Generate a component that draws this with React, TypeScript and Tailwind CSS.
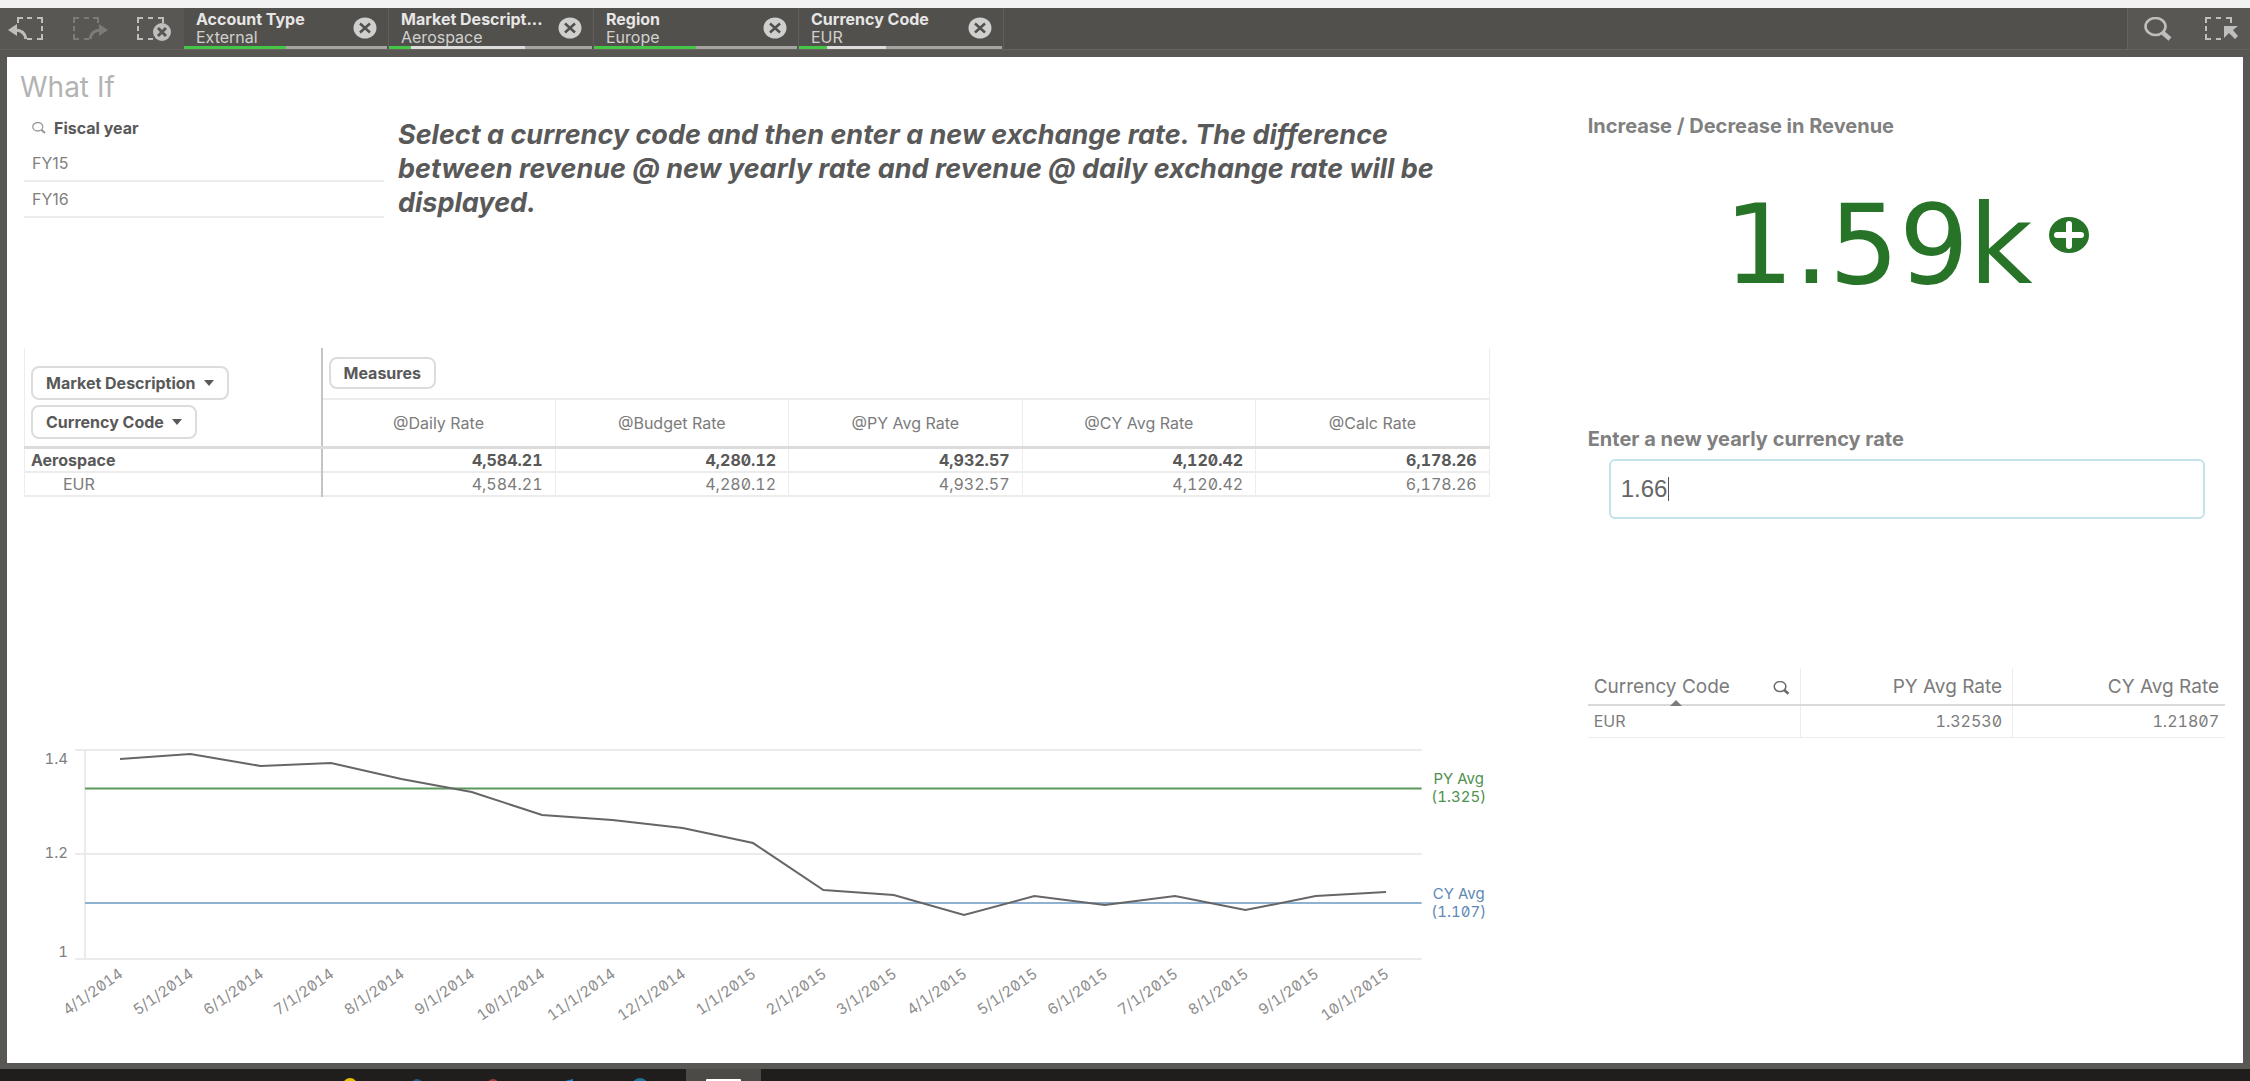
import React, { useState } from 'react';

interface Selection {
  field: string;
  value: string;
  selected: string;
  alternative: string;
}

const selections: Selection[] = [
  { field: 'Account Type', value: 'External', selected: 'w-1/2', alternative: 'w-0' },
  { field: 'Market Descript...', value: 'Aerospace', selected: 'w-[11%]', alternative: 'w-[56%]' },
  { field: 'Region', value: 'Europe', selected: 'w-1/2', alternative: 'w-0' },
  { field: 'Currency Code', value: 'EUR', selected: 'w-[14%]', alternative: 'w-[29%]' },
];

const measures = ['@Daily Rate', '@Budget Rate', '@PY Avg Rate', '@CY Avg Rate', '@Calc Rate'];
const totals = ['4,584.21', '4,280.12', '4,932.57', '4,120.42', '6,178.26'];

const rates = [
  { date: '4/1/2014', y: 760 },
  { date: '5/1/2014', y: 755 },
  { date: '6/1/2014', y: 767 },
  { date: '7/1/2014', y: 764 },
  { date: '8/1/2014', y: 780 },
  { date: '9/1/2014', y: 793 },
  { date: '10/1/2014', y: 816 },
  { date: '11/1/2014', y: 821 },
  { date: '12/1/2014', y: 829 },
  { date: '1/1/2015', y: 844 },
  { date: '2/1/2015', y: 891 },
  { date: '3/1/2015', y: 896 },
  { date: '4/1/2015', y: 916 },
  { date: '5/1/2015', y: 897 },
  { date: '6/1/2015', y: 906 },
  { date: '7/1/2015', y: 897 },
  { date: '8/1/2015', y: 911 },
  { date: '9/1/2015', y: 897 },
  { date: '10/1/2015', y: 893 },
].map((r, i) => ({ date: r.date, x: 96 + i * 70.3, y: r.y - 740 }));

const BackIcon = ({ className = '' }: { className?: string }) => (
  <svg width="36" height="26" viewBox="0 0 36 26" fill="none" stroke="currentColor" strokeWidth="2" className={className}>
    <path d="M10 7V2h5M19 2h5M29 2h5v5M34 10v5M34 18v5h-5M19 23h5" />
    <path d="M7 14c6 0 10 3 11 9" strokeWidth="3" />
    <path d="M0 14l9-6v12z" fill="currentColor" stroke="none" />
  </svg>
);

const ClearIcon = () => (
  <svg width="36" height="26" viewBox="0 0 36 26" fill="none" stroke="currentColor" strokeWidth="2">
    <path d="M2 7V2h5M12 2h5M22 2h5v5M2 10v5M2 18v5h5M12 23h5" />
    <circle cx="26" cy="16" r="9" fill="currentColor" stroke="none" />
    <path d="M22 12l8 8M30 12l-8 8" stroke="#595753" strokeWidth="3" />
  </svg>
);

const SelectIcon = () => (
  <svg width="34" height="26" viewBox="0 0 34 26" fill="none" stroke="currentColor" strokeWidth="2">
    <path d="M2 7V2h5M12 2h5M22 2h5v5M2 10v5M2 18v5h5M12 23h5" />
    <path d="M20 10h14l-5 4 5 6-3 3-6-6-5 5z" fill="currentColor" stroke="none" />
  </svg>
);

const SearchIcon = ({ className = '' }: { className?: string }) => (
  <svg viewBox="0 0 28 24" fill="none" stroke="currentColor" className={className}>
    <ellipse cx="11.500" cy="9.500" rx="10" ry="8.500" strokeWidth="2.600" />
    <path d="M18.500 15.500l7.500 6.500" strokeWidth="4.400" />
  </svg>
);

const CloseIcon = () => (
  <svg width="24" height="22" viewBox="0 0 24 22">
    <ellipse cx="12" cy="11" rx="11.500" ry="10.500" fill="#cfcfce" />
    <path d="M7 6.500l10 9M17 6.500l-10 9" stroke="#52504c" strokeWidth="2.500" />
  </svg>
);

const Caret = () => (
  <svg width="10" height="6" viewBox="0 0 10 6" fill="currentColor">
    <path d="M0 0h10L5 6z" />
  </svg>
);

const SelectionsBar = () => (
  <header className="flex h-[42px] border-b border-[#65635f] bg-[#595753] text-[#bebebd]">
    <div className="flex w-[184px] items-center gap-7 pl-2">
      <button aria-label="Step back"><BackIcon /></button>
      <button aria-label="Step forward" disabled><BackIcon className="-scale-x-100 text-[#7d7b78]" /></button>
      <button aria-label="Clear all selections"><ClearIcon /></button>
    </div>
    <div className="flex flex-1 bg-[#52504c]">
      {selections.map((s) => (
        <div key={s.field} className="flex w-[205px] flex-col border-r border-[#605e5a] pr-px">
          <div className="flex flex-1 items-center justify-between pt-[2px] pr-[10px] pl-3">
            <div className="text-base leading-[18px]">
              <div className="font-bold text-[#e6e6e6]">{s.field}</div>
              <div className="text-[#d0d0cf]">{s.value}</div>
            </div>
            <button aria-label={`Clear ${s.field}`}><CloseIcon /></button>
          </div>
          <div className="flex h-[3px] shrink-0 bg-[#a6a5a3]">
            <div className={`bg-[#46c646] ${s.selected}`} />
            <div className={`bg-[#dddddd] ${s.alternative}`} />
          </div>
        </div>
      ))}
    </div>
    <div className="flex items-center gap-8 border-l border-[#65635f] pr-3 pl-4">
      <button aria-label="Search"><SearchIcon className="h-6 w-7" /></button>
      <button aria-label="Selections tool"><SelectIcon /></button>
    </div>
  </header>
);

const FiscalYearFilter = () => (
  <div className="w-[360px] text-base text-[#7f7f7f]">
    <div className="flex h-9 items-center gap-2 pl-2">
      <SearchIcon className="h-3 w-[14px] text-[#999999]" />
      <h2 className="font-bold text-[#595959]">Fiscal year</h2>
    </div>
    <ul>
      {['FY15', 'FY16'].map((year) => (
        <li key={year} className="flex h-9 items-center border-b-2 border-[#ececec] pl-2">{year}</li>
      ))}
    </ul>
  </div>
);

const PivotTable = () => {
  const chip = 'inline-flex items-center gap-2 rounded-lg border-2 border-[#dcdcdc] px-[13px] font-bold text-[#595959]';
  return (
    <table className="w-full table-fixed border-collapse text-base text-[#7b7b7b]">
      <colgroup>
        <col className="w-[297px]" />
        {measures.map((m) => <col key={m} />)}
      </colgroup>
      <thead>
        <tr className="h-[51px]">
          <th rowSpan={2} className="border-r-2 border-b-[3px] border-l border-l-[#ececec] border-r-[#c4c4c4] border-b-[#dcdcdc] pt-3 pl-[6px]">
            <div className="flex flex-col items-start gap-[5px]">
              <button className={`${chip} h-[34px]`}>Market Description <Caret /></button>
              <button className={`${chip} h-[34px]`}>Currency Code <Caret /></button>
            </div>
          </th>
          <th colSpan={5} className="border-r border-b-2 border-[#ececec] pl-[6px] text-left">
            <button className={`${chip} h-8`}>Measures</button>
          </th>
        </tr>
        <tr className="h-12">
          {measures.map((m) => (
            <th key={m} className="border-r border-b-[3px] border-r-[#ececec] border-b-[#dcdcdc] font-normal">{m}</th>
          ))}
        </tr>
      </thead>
      <tbody className="leading-[22px]">
        <tr className="border-b-2 border-[#ececec] font-bold text-[#595959]">
          <th className="border-r-2 border-l border-l-[#ececec] border-r-[#c4c4c4] pl-[6px] text-left">Aerospace</th>
          {totals.map((t) => (
            <td key={t} className="border-r border-[#ececec] pr-3 text-right slashed-zero tabular-nums">{t}</td>
          ))}
        </tr>
        <tr className="border-b-2 border-[#ececec]">
          <th className="border-r-2 border-l border-l-[#ececec] border-r-[#c4c4c4] pl-[38px] text-left font-normal">EUR</th>
          {totals.map((t) => (
            <td key={t} className="border-r border-[#ececec] pr-3 text-right slashed-zero tabular-nums">{t}</td>
          ))}
        </tr>
      </tbody>
    </table>
  );
};

const RateChart = () => (
  <svg viewBox="0 0 1465 300" className="block w-full text-[15px] slashed-zero tabular-nums" role="img" aria-label="Exchange rate by month">
    <g stroke="#ebebeb" strokeWidth="2">
      <path d="M51 11H1397M51 115H1397M51 220H1397M61 11V220" />
    </g>
    <g fill="#7f7f7f" textAnchor="end">
      <text x="44" y="25">1.4</text>
      <text x="44" y="119">1.2</text>
      <text x="44" y="218">1</text>
    </g>
    <path d="M61 49.500H1397" stroke="#5b985b" strokeWidth="2" />
    <path d="M61 164H1397" stroke="#8fb2d3" strokeWidth="2" />
    <polyline points={rates.map((r) => `${r.x},${r.y}`).join(' ')} fill="none" stroke="#666666" strokeWidth="2" />
    <g textAnchor="middle" fill="#4f8f4f">
      <text x="1434" y="45">PY Avg</text>
      <text x="1434" y="63">(1.325)</text>
    </g>
    <g textAnchor="middle" fill="#6189b5">
      <text x="1434" y="160">CY Avg</text>
      <text x="1434" y="178">(1.107)</text>
    </g>
    <g textAnchor="end" fill="#8c8c8c">
      {rates.map((r) => (
        <text key={r.date} transform={`translate(${r.x + 4} 237) rotate(-35)`}>{r.date}</text>
      ))}
    </g>
  </svg>
);

const RateTable = () => (
  <table className="w-full table-fixed border-collapse text-[#7b7b7b]">
    <thead>
      <tr className="h-[37px] border-b-2 border-[#d9d9d9] text-[19px]">
        <th className="border-r border-r-[#ececec] px-[6px] pt-[3px] font-normal">
          <div className="relative flex items-center justify-between pr-1">
            Currency Code
            <SearchIcon className="h-[14px] w-[17px] text-[#6b6b6b]" />
            <svg width="12" height="6" viewBox="0 0 12 6" className="absolute -bottom-1 left-[76px]" fill="#7b7b7b">
              <path d="M0 6h12L6 0z" />
            </svg>
          </div>
        </th>
        <th className="border-r border-r-[#ececec] px-[10px] pt-[3px] text-right font-normal">PY Avg Rate</th>
        <th className="px-[6px] pt-[3px] text-right font-normal">CY Avg Rate</th>
      </tr>
    </thead>
    <tbody>
      <tr className="h-8 border-b border-[#ececec] text-base">
        <td className="border-r border-r-[#ececec] px-[6px]">EUR</td>
        <td className="border-r border-r-[#ececec] px-[10px] text-right slashed-zero tabular-nums">1.32530</td>
        <td className="px-[6px] text-right slashed-zero tabular-nums">1.21807</td>
      </tr>
    </tbody>
  </table>
);

const RateInput = () => {
  const [rate, setRate] = useState('1.66');

  return (
    <div className="text-xl leading-7 font-bold text-[#808080]">
      <label htmlFor="rate">Enter a new yearly currency rate</label>
      <div className="relative mt-[6px] mr-5 ml-[21px]">
        <input
          id="rate"
          value={rate}
          onChange={(e) => setRate(e.target.value)}
          className="h-[60px] w-full rounded-md border-2 border-[#c3e2ec] px-[10px] font-['Liberation_Sans',sans-serif] text-2xl font-normal text-[#666666] outline-none"
        />
        <span className="absolute top-[18px] left-[59px] h-6 w-px bg-[#555555]" />
      </div>
    </div>
  );
};

const Taskbar = () => (
  <footer className="h-3 bg-[#1f1e1c]">
    <svg width="800" height="12" viewBox="0 0 800 12" className="block">
      <rect x="686" width="75" height="12" fill="#4b4a47" />
      <rect x="706" y="10" width="35" height="4" rx="1" fill="#ffffff" />
      <circle cx="350" cy="16" r="7" fill="#e5c100" />
      <circle cx="417" cy="16" r="6" fill="#1f5a86" />
      <circle cx="493" cy="16" r="6" fill="#a03c3c" />
      <path d="M565 12l8-2v2z" fill="#1f7fd0" />
      <circle cx="640" cy="17" r="8" fill="#1f6f9a" />
    </svg>
  </footer>
);

const App: React.FC = () => {
  return (
    <div className="flex min-h-screen flex-col bg-[#595753] font-['Inter',sans-serif]">
      <div className="h-2 bg-[#f2f2f2]" />
      <SelectionsBar />
      <main className="mx-[7px] mt-[7px] mb-[6px] grid flex-1 grid-cols-[1465fr_637fr] content-start gap-x-[98px] bg-white pr-[18px] pl-[17px]">
        <section>
          <h1 className="-ml-1 pt-3 text-[28px] leading-9 text-[#b3b3b3]">What If</h1>
          <div className="mt-[5px] flex items-start gap-[14px]">
            <FiscalYearFilter />
            <p className="mt-2 flex-1 text-[27px] leading-[34px] font-bold text-[#595959] italic">
              Select a currency code and then enter a new exchange rate. The difference between revenue @ new yearly
              rate and revenue @ daily exchange rate will be displayed.
            </p>
          </div>
          <div className="mt-[128px]">
            <PivotTable />
          </div>
          <div className="mt-[242px]">
            <RateChart />
          </div>
        </section>
        <section className="pt-[55px]">
          <h2 className="text-xl leading-7 font-bold text-[#808080]">Increase / Decrease in Revenue</h2>
          <div className="mt-[42px] flex justify-center gap-4 font-['DejaVu_Sans',sans-serif] text-[110px] leading-[126px] text-[#277327]">
            1.59k
            <svg width="40" height="36" viewBox="0 0 40 36" className="mt-[35px]">
              <ellipse cx="20" cy="18" rx="20" ry="18" fill="currentColor" />
              <path d="M8 18h24M20 7v22" stroke="#ffffff" strokeWidth="6" strokeLinecap="round" />
            </svg>
          </div>
          <div className="mt-[117px]">
            <RateInput />
          </div>
          <div className="mt-[149px]">
            <RateTable />
          </div>
        </section>
      </main>
      <Taskbar />
    </div>
  );
};

export default App;
